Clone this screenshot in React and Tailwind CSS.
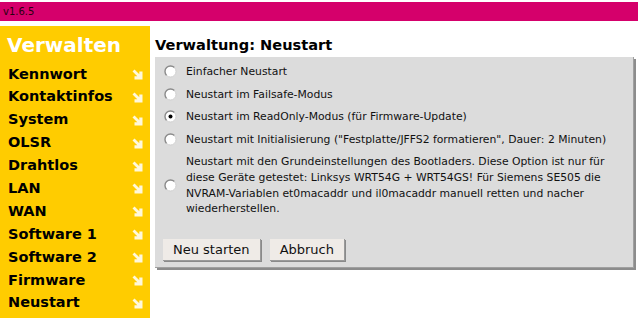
import { useState } from 'react'

const menu = ['Kennwort', 'Kontaktinfos', 'System', 'OLSR', 'Drahtlos', 'LAN', 'WAN', 'Software 1', 'Software 2', 'Firmware', 'Neustart']

const options = [
  'Einfacher Neustart',
  'Neustart im Failsafe-Modus',
  'Neustart im ReadOnly-Modus (für Firmware-Update)',
  'Neustart mit Initialisierung ("Festplatte/JFFS2 formatieren", Dauer: 2 Minuten)',
  'Neustart mit den Grundeinstellungen des Bootladers. Diese Option ist nur für diese Geräte getestet: Linksys WRT54G + WRT54GS! Für Siemens SE505 die NVRAM-Variablen et0macaddr und il0macaddr manuell retten und nacher wiederherstellen.',
]

const Arrow = () => (
  <svg width="11" height="11" viewBox="0 0 11 11" className="shrink-0">
    <path d="M0.5 2.5 L2.5 0.5 L7.3 5.3 L7.3 2.5 L10.5 2.5 L10.5 10.5 L2.5 10.5 L2.5 7.3 L5.3 7.3 Z" fill="#fff8dc" />
  </svg>
)

const Radio = ({ checked }) => (
  <svg width="13" height="13" viewBox="0 0 13 13" className="shrink-0">
    <circle cx="6.5" cy="6.5" r="5.5" fill="#fff" />
    <path d="M2.6 10.4 A5.5 5.5 0 0 1 10.4 2.6" fill="none" stroke="#8a8a8a" strokeWidth="1.4" />
    <path d="M10.4 2.6 A5.5 5.5 0 0 1 2.6 10.4" fill="none" stroke="#d0d0d0" strokeWidth="1" />
    {checked && <circle cx="6.5" cy="6.5" r="2" fill="#000" />}
  </svg>
)

export default function App() {
  const [sel, setSel] = useState(2)

  return (
    <div className="w-[638px] h-[323px] bg-white overflow-hidden font-['DejaVu_Sans',sans-serif]">
      <div className="h-[19px] mt-[2px] bg-[#d5006b] px-[3px] text-[10px] leading-[19px] text-[#2a0010]">v1.6.5</div>

      <div className="flex mt-[5px]">
        {/* Sidebar */}
        <div className="w-[150px] h-[292px] bg-[#ffcc00] pt-[6px]">
          <div className="px-[7px] text-[20px] font-bold leading-[26px] text-white">Verwalten</div>
          <div className="mt-[5px] flex flex-col">
            {menu.map((m) => (
              <div key={m} className="flex items-center justify-between pl-[8px] pr-[7px] h-[22.9px]">
                <span className="text-[14.5px] font-bold text-black">{m}</span>
                <Arrow />
              </div>
            ))}
          </div>
        </div>

        {/* Content */}
        <div className="flex-1 pl-[5px] pr-[4px]">
          <h1 className="text-[14.6px] font-bold text-black leading-[18px] mt-[10px]">Verwaltung: Neustart</h1>
          <div className="mt-[3px] bg-[#dcdcdc] shadow-[2px_2px_0_#8c8c8c] border-r border-b border-[#a0a0a0] pt-[7px] pb-[6px] pl-[9px] pr-[12px]">
            <div className="flex flex-col gap-[7px]">
              {options.map((o, i) => (
                <label key={i} className="flex items-center gap-[9px] cursor-pointer" onClick={() => setSel(i)}>
                  <Radio checked={sel === i} />
                  <span className="text-[10.8px] leading-[15.6px] text-[#111]">{o}</span>
                </label>
              ))}
            </div>
            <div className="flex gap-[9px] mt-[22px] -ml-[1px]">
              <button className="h-[22px] px-[10px] bg-[#efebe7] text-[13px] text-[#111] shadow-[1px_1px_0_#8a8a8a] border-r border-b border-[#9a9a9a]">Neu starten</button>
              <button className="h-[22px] px-[10px] bg-[#efebe7] text-[13px] text-[#111] shadow-[1px_1px_0_#8a8a8a] border-r border-b border-[#9a9a9a]">Abbruch</button>
            </div>
          </div>
        </div>
      </div>
    </div>
  )
}
